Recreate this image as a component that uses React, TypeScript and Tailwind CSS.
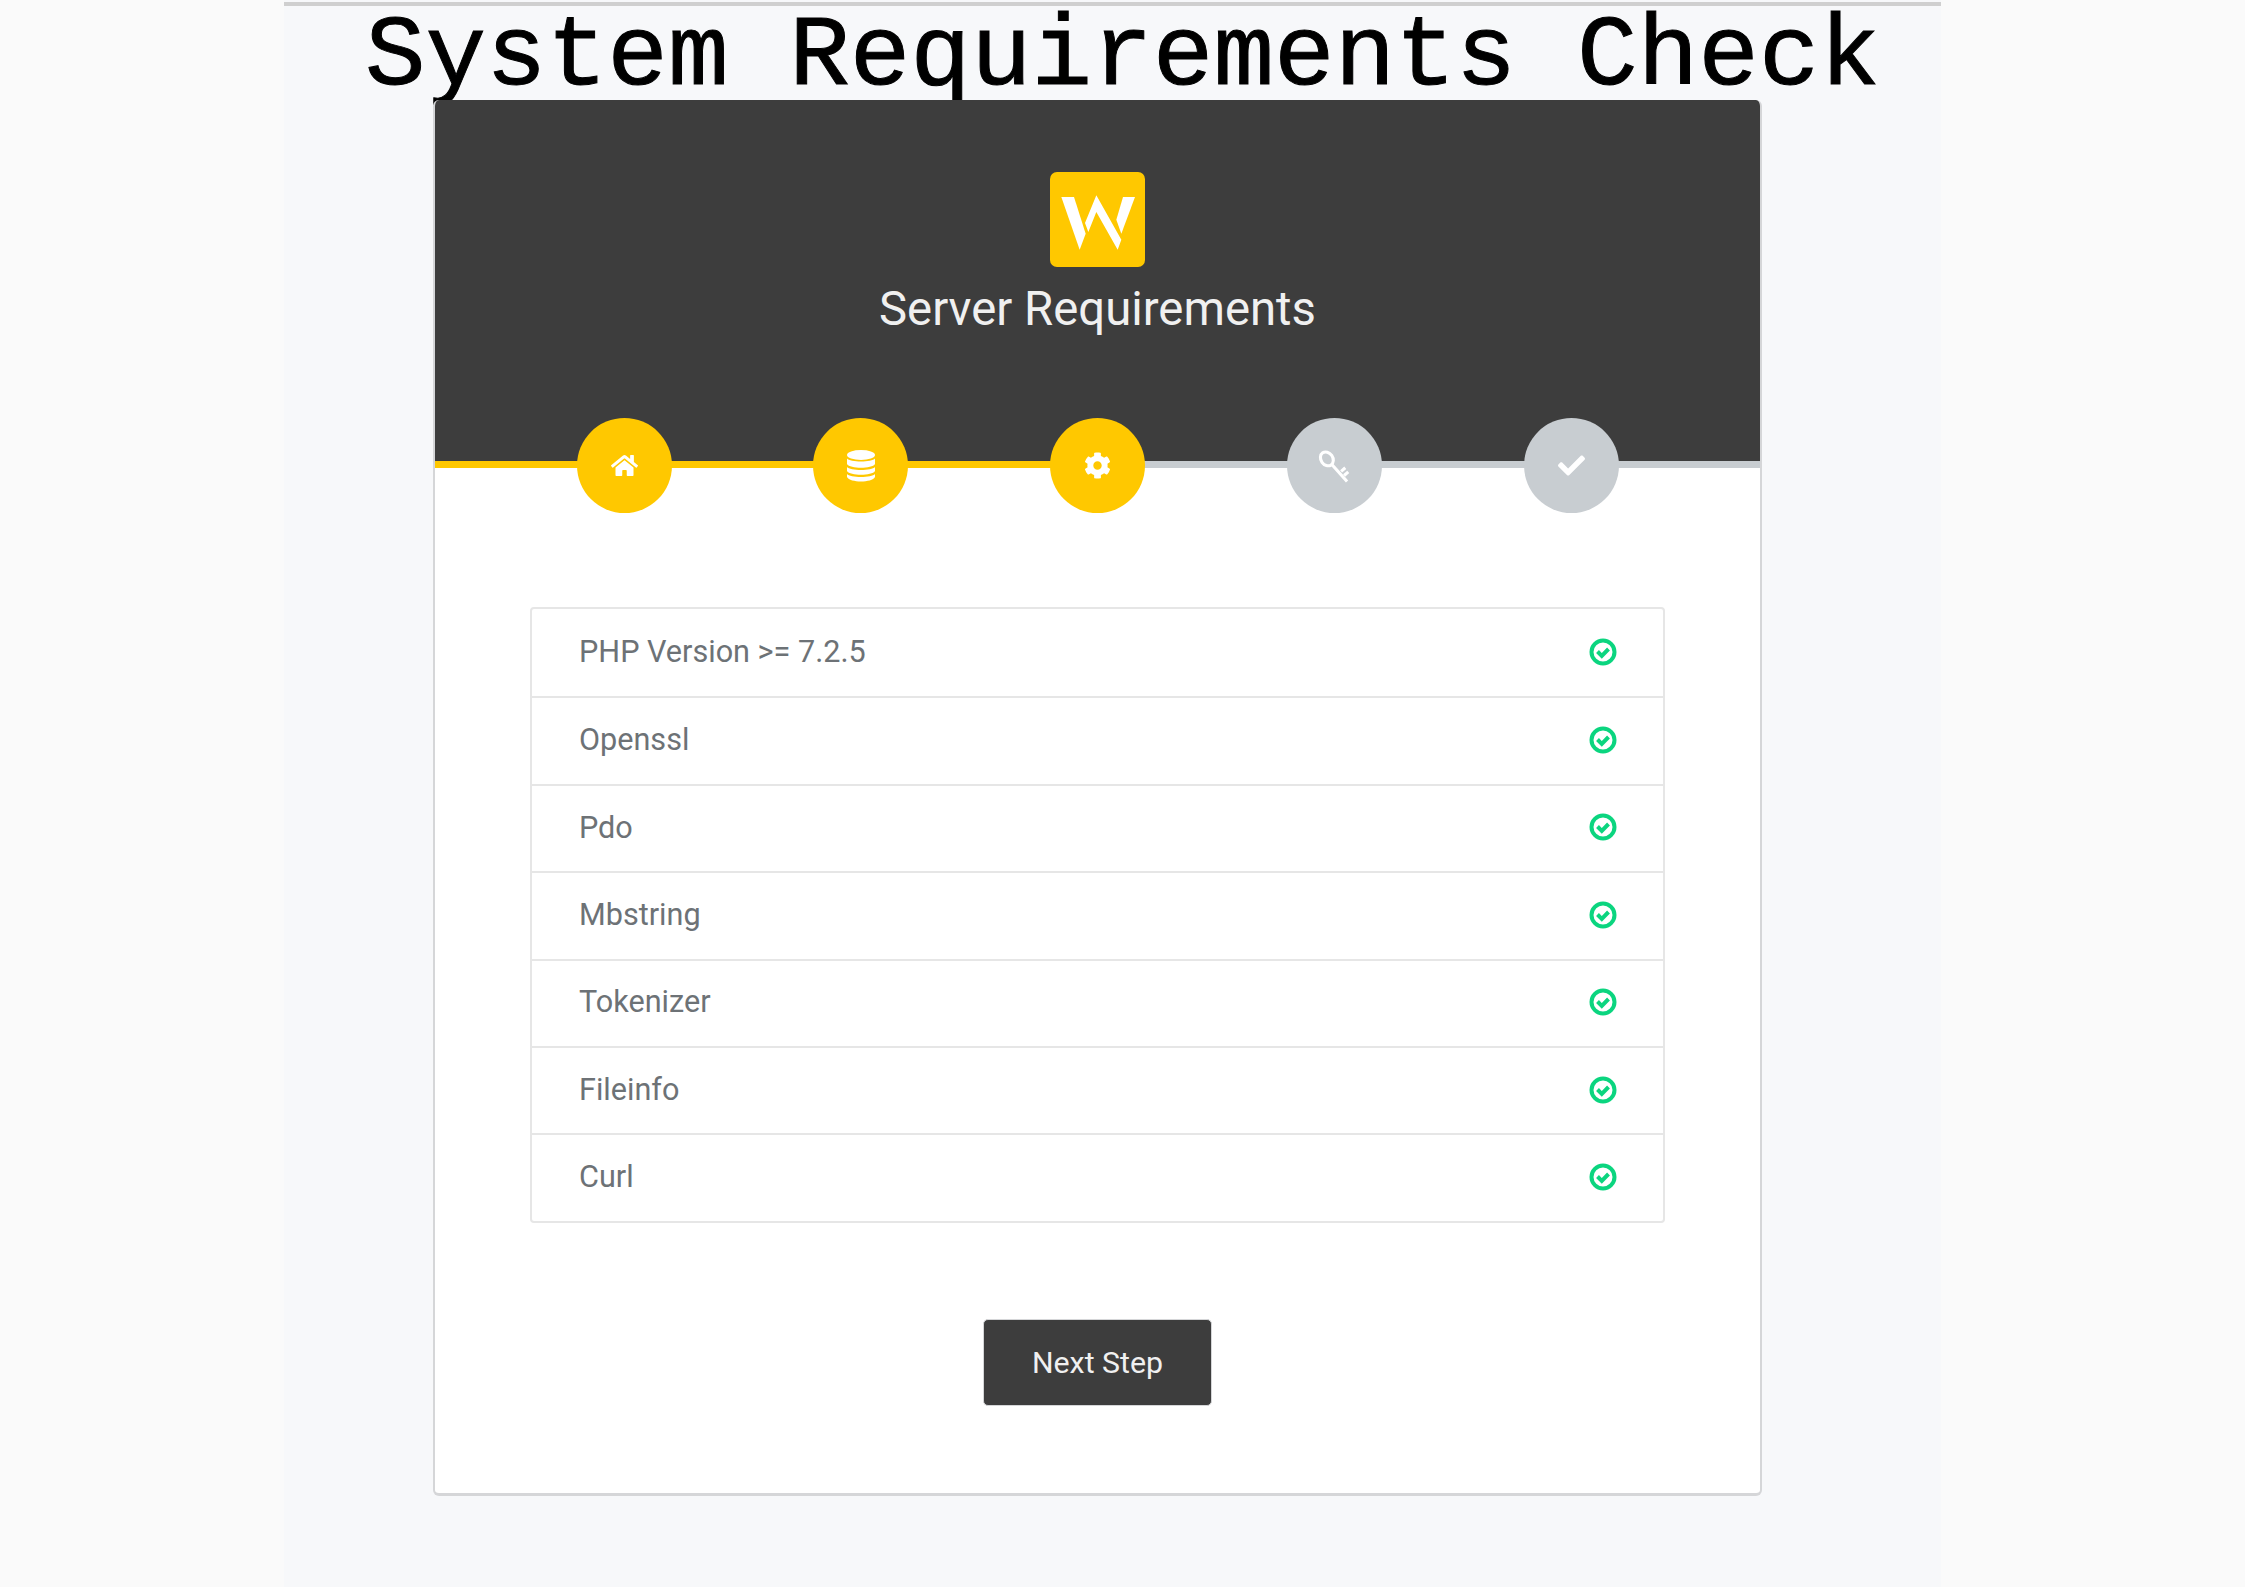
import { FaCheck, FaCog, FaHome } from 'react-icons/fa'

const REQUIREMENTS = ['PHP Version >= 7.2.5', 'Openssl', 'Pdo', 'Mbstring', 'Tokenizer', 'Fileinfo', 'Curl']

function Logo() {
  return (
    <div className="flex h-[95px] w-[95px] items-center justify-center rounded-[7px] bg-[#ffc800]">
      <svg viewBox="211 65 285 285" className="h-[95px] w-[95px]" fill="#fff">
        <polygon points="245,140 283,140 318,250 300,298" />
        <polygon points="316,218 350,135 425,268 414,298 350,185 326,245" />
        <polygon points="430,140 466,140 425,250 410,208" />
      </svg>
    </div>
  )
}

function KeyIcon() {
  return (
    <svg viewBox="0 0 32 32" className="h-[38px] w-[38px]" fill="none" stroke="#fff" strokeWidth="2.6">
      <ellipse cx="10" cy="10" rx="5" ry="6.2" transform="rotate(-35 10 10)" />
      <path d="M14 14.5 L27 29" />
      <path d="M22 20.5 L25.5 17.5 M24.5 24 L28 21" />
    </svg>
  )
}

function DatabaseIcon() {
  return (
    <svg viewBox="0 0 28 32" className="h-[32px] w-[28px]" fill="#fff">
      <ellipse cx="14" cy="5" rx="14" ry="5" />
      <path d="M0 8.5 C3 12.5 25 12.5 28 8.5 V14 C25 19 3 19 0 14 Z" />
      <path d="M0 17 C3 21 25 21 28 17 V21 C25 26 3 26 0 21 Z" />
      <path d="M0 24 C3 28 25 28 28 24 V27 C25 33 3 33 0 27 Z" />
    </svg>
  )
}

function CheckCircle() {
  return (
    <svg viewBox="0 0 28 28" className="h-[28px] w-[28px]" fill="none" stroke="#0bd57f">
      <circle cx="14" cy="14" r="11.5" strokeWidth="4" />
      <path d="M8.5 13.5 L12.8 17.8 L19.5 11" strokeWidth="4" />
    </svg>
  )
}

const STEPS = [
  { icon: <FaHome size={27} color="#fff" />, bg: 'bg-[#ffc800]' },
  { icon: <DatabaseIcon />, bg: 'bg-[#ffc800]' },
  { icon: <FaCog size={27} color="#fff" />, bg: 'bg-[#ffc800]' },
  { icon: <KeyIcon />, bg: 'bg-[#c8cdd1]' },
  { icon: <FaCheck size={27} color="#fff" />, bg: 'bg-[#c8cdd1]' },
]

export default function App() {
  return (
    <div className="min-h-screen bg-[#fafafa] font-['Roboto',sans-serif]">
      <div className="ml-[284px] w-[1657px] bg-[#f7f8fa] pt-[2px]">
        <div className="h-[4px] bg-[#cfcfcf]" />
        <h1 className="h-[94px] pt-[3px] pl-[20px] text-center font-['Liberation_Mono',monospace] text-[101px] leading-[97px] font-normal whitespace-nowrap text-black [-webkit-text-stroke:1px_#000]">
          System Requirements Check
        </h1>

        <div className="relative ml-[149px] w-[1329px] overflow-hidden rounded-[6px] border-x-2 border-b-[3px] border-[#d5d6d8] bg-white">
          <div className="flex h-[361px] flex-col items-center bg-[#3d3d3d] pt-[72px]">
            <Logo />
            <h2 className="mt-[12px] text-[47.3px] leading-[60px] font-normal text-[#f0f0f0]">Server Requirements</h2>
          </div>

          {/* progress line and step circles */}
          <div className="flex h-[7px]">
            <div className="w-1/2 bg-[#ffc800]" />
            <div className="w-1/2 bg-[#c8cdd1]" />
          </div>
          <div className="relative mt-[-50px] flex justify-center gap-[141.75px]">
            {STEPS.map((s, i) => (
              <div key={i} className={`flex h-[95px] w-[95px] items-center justify-center rounded-full ${s.bg}`}>
                {s.icon}
              </div>
            ))}
          </div>

          <div className="mx-[95px] mt-[94px] rounded-[4px] border-2 border-[#e6e6e6]">
            {REQUIREMENTS.map((r, i) => (
              <div
                key={r}
                className={`flex h-[87.4px] items-center justify-between pr-[46px] pb-[2px] pl-[47px] text-[30.6px] text-[#6d7276] ${
                  i > 0 ? 'border-t-2 border-[#e6e6e6]' : ''
                }`}
              >
                <span>{r}</span>
                <CheckCircle />
              </div>
            ))}
          </div>

          <div className="mt-[96px] flex justify-center pb-[87px]">
            <button className="h-[87px] w-[229px] rounded-[5px] border border-[#d5d6d8] bg-[#3d3d3d] text-[30.3px] text-[#f0f0f0]">
              Next Step
            </button>
          </div>
        </div>
        <div className="h-[93px]" />
      </div>
    </div>
  )
}
